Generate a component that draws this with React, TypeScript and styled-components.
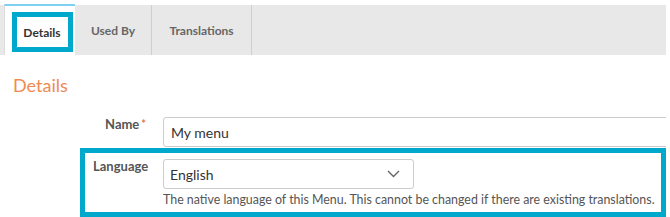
import styled, { createGlobalStyle } from "styled-components";

const GlobalStyle = createGlobalStyle`
  body {
    margin: 0;
    background: #fff;
    font-family: Lato, "Open Sans", sans-serif;
    color: #333;
  }
`;

const Frame = styled.div`
  width: 666px;
  overflow: hidden;
  padding-top: 5px;
`;

const TabBar = styled.ul`
  display: flex;
  margin: 0;
  padding: 0 0 0 4px;
  list-style: none;
  height: 50px;
  background: #e8e8e8;
`;

const Tab = styled.li<{ $active?: boolean; $width: number }>`
  display: flex;
  align-items: center;
  justify-content: center;
  box-sizing: border-box;
  width: ${({ $width }) => $width}px;
  font-size: 12px;
  font-weight: 700;
  user-select: none;
  ${({ $active }) =>
    $active
      ? `
    margin-top: -1px;
    background: #fff;
    border-top: 2px solid #7fd1f3;
    border-left: 1px solid #dcdcdc;
    color: #333;
  `
      : `
    border-right: 1px solid #cfcfcf;
    color: #666;
  `}
`;

const TabMark = styled.span`
  display: flex;
  align-items: center;
  justify-content: center;
  box-sizing: border-box;
  width: 61px;
  height: 40px;
  margin: 3px -2px 0 2px;
  border: 5px solid #00a9cc;
`;

const Heading = styled.h2`
  margin: 19px 0 0 13px;
  font-size: 18px;
  line-height: 22px;
  font-weight: 400;
  color: #f08a52;
`;

const Form = styled.div`
  padding: 21px 0 0 80px;
  display: flex;
  flex-direction: column;
  gap: 1px;
`;

const FieldRow = styled.div<{ $highlight?: boolean }>`
  display: grid;
  grid-template-columns: 53px 1fr;
  column-gap: 17px;
  ${({ $highlight }) =>
    $highlight
      ? `
    border: 5px solid #00a9cc;
    padding: 6px 8px 4px;
  `
      : `
    padding: 0 0 0 13px;
  `}
`;

const Label = styled.label`
  margin-top: -1px;
  font-size: 13px;
  line-height: 16px;
  font-weight: 700;
  color: #555;
  text-align: right;
  white-space: nowrap;
`;

const Required = styled.span`
  margin-left: 2px;
  font-size: 11px;
  vertical-align: top;
  color: #e5734c;
`;

const Control = styled.div`
  display: flex;
  flex-direction: column;
  gap: 3px;
`;

const TextInput = styled.input`
  box-sizing: border-box;
  width: 600px;
  height: 30px;
  padding: 0 7px;
  border: 1px solid #cccccc;
  border-radius: 3px;
  font-family: inherit;
  font-size: 14px;
  color: #333;
  background: #fff;
  outline: none;
`;

const SelectBox = styled.div`
  position: relative;
  width: 251px;
  height: 30px;
`;

const Select = styled.select`
  box-sizing: border-box;
  width: 100%;
  height: 100%;
  padding: 0 30px 0 6px;
  appearance: none;
  border: 1px solid #cccccc;
  border-radius: 3px;
  background: #fff;
  font-family: inherit;
  font-size: 14px;
  color: #333;
  outline: none;
`;

const Chevron = styled.svg`
  position: absolute;
  right: 14px;
  top: 11px;
  pointer-events: none;
`;

const Help = styled.p`
  margin: 0;
  font-size: 12.4px;
  line-height: 16px;
  color: #555;
  white-space: nowrap;
`;

export default function App() {
  return (
    <>
      <GlobalStyle />
      <Frame>
        <TabBar>
          <Tab $active $width={71}>
            <TabMark>Details</TabMark>
          </Tab>
          <Tab $width={77}>Used By</Tab>
          <Tab $width={100}>Translations</Tab>
        </TabBar>

        <Heading>Details</Heading>

        <Form>
          <FieldRow>
            <Label htmlFor="name">
              Name<Required>*</Required>
            </Label>
            <Control>
              <TextInput id="name" defaultValue="My menu" />
            </Control>
          </FieldRow>

          <FieldRow $highlight>
            <Label htmlFor="language">Language</Label>
            <Control>
              <SelectBox>
                <Select id="language" defaultValue="en">
                  <option value="en">English</option>
                  <option value="fr">French</option>
                  <option value="de">German</option>
                </Select>
                <Chevron width="13" height="8" viewBox="0 0 13 8">
                  <path
                    d="M1 1l5.5 5.5L12 1"
                    fill="none"
                    stroke="#666"
                    strokeWidth="1.4"
                  />
                </Chevron>
              </SelectBox>
              <Help>
                The native language of this Menu. This cannot be changed if
                there are existing translations.
              </Help>
            </Control>
          </FieldRow>
        </Form>
      </Frame>
    </>
  );
}
